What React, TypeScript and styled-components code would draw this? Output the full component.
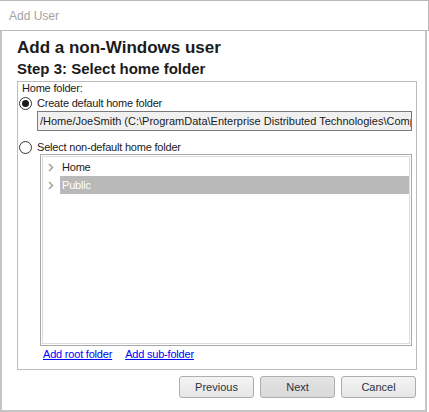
import React, { useState } from "react";
import styled, { createGlobalStyle } from "styled-components";

const Global = createGlobalStyle`
  html, body { margin: 0; padding: 0; background: #ffffff; }
  body { font-family: "Liberation Sans", Arial, sans-serif; }
  * { box-sizing: border-box; }
`;

const Window = styled.div`
  width: 429px;
  height: 412px;
  display: flex;
  flex-direction: column;
  background: #ffffff;
`;

const TitleBar = styled.div`
  height: 31px;
  flex: none;
  display: flex;
  align-items: center;
  padding: 0 0 0 9px;
  border-top: 1px solid #b9b9b9;
  border-right: 1px solid #b9b9b9;
  border-bottom: 1px solid #b9b9b9;
  font-size: 12px;
  color: #a3a3a3;
`;

const Body = styled.div`
  width: 427px;
  flex: 1;
  display: flex;
  flex-direction: column;
  padding: 7px 8px 0 15px;
  border-left: 2px solid #c4c4c4;
  border-right: 2px solid #c4c4c4;
  border-bottom: 2px solid #c4c4c4;
`;

const Heading = styled.div`
  font-size: 17px;
  font-weight: bold;
  line-height: 20px;
  color: #1b1b1b;
`;

const SubHeading = styled.div`
  margin-top: 2px;
  font-size: 15px;
  font-weight: bold;
  line-height: 18px;
  color: #1b1b1b;
`;

const GroupBox = styled.div`
  margin-top: 3px;
  width: 400px;
  display: flex;
  flex-direction: column;
  border: 1px solid #bcbcbc;
  padding: 0 0 8px 0;
  font-size: 11px;
  letter-spacing: -0.2px;
  color: #1b1b1b;
`;

const GroupLabel = styled.div`
  line-height: 13px;
  padding-left: 4px;
`;

const RadioRow = styled.label<{ $h: number; $mt: number }>`
  display: flex;
  align-items: center;
  gap: 5px;
  height: ${(p) => p.$h}px;
  margin-top: ${(p) => p.$mt}px;
  padding-left: 1px;
  cursor: default;
`;

const RadioDot = styled.span<{ $on: boolean }>`
  width: 13px;
  height: 13px;
  flex: none;
  border-radius: 50%;
  border: 1px solid #333333;
  background: #ffffff;
  display: flex;
  align-items: center;
  justify-content: center;
  &::after {
    content: "";
    width: 7px;
    height: 7px;
    border-radius: 50%;
    background: ${(p) => (p.$on ? "#1b1b1b" : "transparent")};
  }
`;

const PathField = styled.div`
  margin: 0 4px 0 19px;
  height: 20px;
  border: 1px solid #7a7a7a;
  background: #f0f0f0;
  padding: 0 2px;
  line-height: 18px;
  letter-spacing: 0;
  white-space: nowrap;
  overflow: hidden;
  color: #1b1b1b;
`;

const TreeOuter = styled.div`
  margin: 0 4px 0 22px;
  height: 192px;
  border: 1px solid #a8a8a8;
  padding: 1px;
  display: flex;
`;

const TreeInner = styled.div`
  flex: 1;
  border: 1px solid #dcdcdc;
  padding-top: 1px;
  display: flex;
  flex-direction: column;
`;

const TreeRow = styled.div`
  display: flex;
  height: 18px;
  padding-left: 4px;
`;

const Expander = styled.span`
  width: 13px;
  flex: none;
  display: flex;
  align-items: center;
  padding-left: 1px;
`;

const NodeLabel = styled.span<{ $selected: boolean }>`
  flex: 1;
  padding-left: 2px;
  line-height: 18px;
  background: ${(p) => (p.$selected ? "#b9b9b9" : "transparent")};
  color: ${(p) => (p.$selected ? "#ffffff" : "#1b1b1b")};
`;

const LinkRow = styled.div`
  display: flex;
  gap: 13px;
  margin-top: 1px;
  padding-left: 25px;
  line-height: 14px;
`;

const Link = styled.a`
  color: #0000ff;
  text-decoration: underline;
  cursor: pointer;
`;

const ButtonRow = styled.div`
  display: flex;
  justify-content: flex-end;
  gap: 6px;
  margin: 6px 1px 0 0;
`;

const Button = styled.button<{ $default?: boolean }>`
  width: 75px;
  height: 22px;
  padding: 0;
  border: 1px solid #adadad;
  border-radius: 3px;
  background: ${(p) =>
    p.$default
      ? "linear-gradient(#e4e4e4, #d9d9d9)"
      : "linear-gradient(#f4f4f4, #e6e6e6)"};
  font-family: "Liberation Sans", Arial, sans-serif;
  font-size: 11px;
  color: #2a3340;
`;

const Chevron = () => (
  <svg width="6" height="9" viewBox="0 0 6 9">
    <path d="M1 1 L4.5 4.5 L1 8" fill="none" stroke="#a6a6a6" strokeWidth="1.6" />
  </svg>
);

const folders = ["Home", "Public"];

export default function App() {
  const [useDefault, setUseDefault] = useState(true);
  const [selected, setSelected] = useState("Public");

  return (
    <>
      <Global />
      <Window>
        <TitleBar>Add User</TitleBar>
        <Body>
          <Heading>Add a non-Windows user</Heading>
          <SubHeading>Step 3: Select home folder</SubHeading>
          <GroupBox>
            <GroupLabel>Home folder:</GroupLabel>
            <RadioRow $h={16} $mt={0} onClick={() => setUseDefault(true)}>
              <RadioDot $on={useDefault} />
              Create default home folder
            </RadioRow>
            <PathField>
              /Home/JoeSmith (C:\ProgramData\Enterprise Distributed Technologies\Components\Home\JoeSmith)
            </PathField>
            <RadioRow $h={14} $mt={9} onClick={() => setUseDefault(false)}>
              <RadioDot $on={!useDefault} />
              Select non-default home folder
            </RadioRow>
            <TreeOuter>
              <TreeInner>
                {folders.map((f) => (
                  <TreeRow key={f} onClick={() => setSelected(f)}>
                    <Expander>
                      <Chevron />
                    </Expander>
                    <NodeLabel $selected={selected === f}>{f}</NodeLabel>
                  </TreeRow>
                ))}
              </TreeInner>
            </TreeOuter>
            <LinkRow>
              <Link>Add root folder</Link>
              <Link>Add sub-folder</Link>
            </LinkRow>
          </GroupBox>
          <ButtonRow>
            <Button>Previous</Button>
            <Button $default>Next</Button>
            <Button>Cancel</Button>
          </ButtonRow>
        </Body>
      </Window>
    </>
  );
}
